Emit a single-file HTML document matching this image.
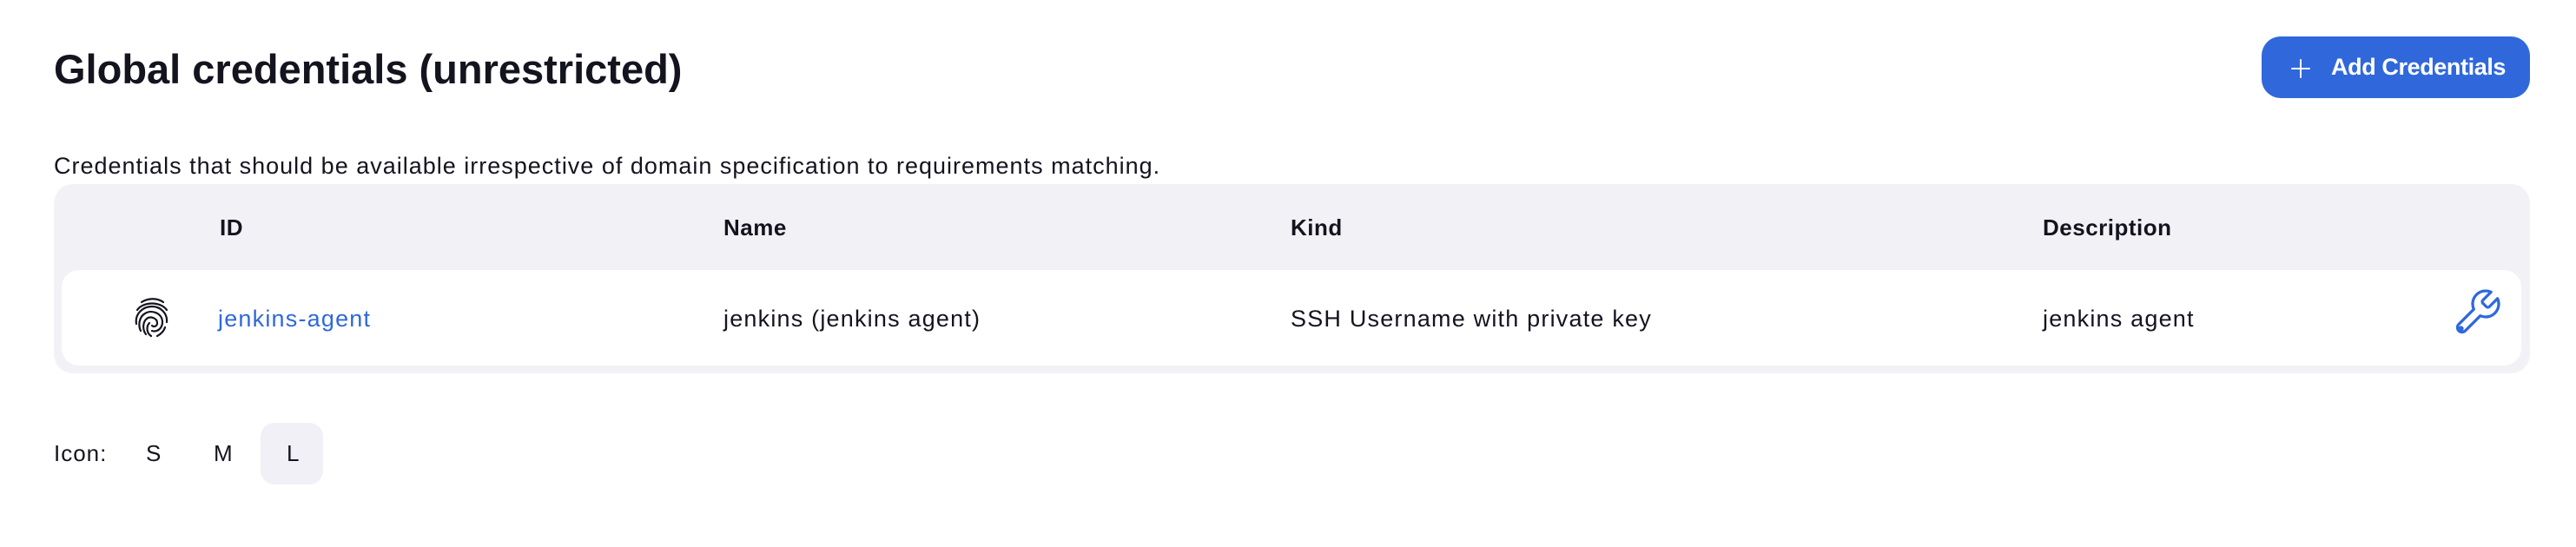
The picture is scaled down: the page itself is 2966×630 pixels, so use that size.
<!DOCTYPE html>
<html><head><meta charset="utf-8"><style>
*{margin:0;padding:0;box-sizing:border-box}
body{width:2966px;height:630px;background:#fff;font-family:"Liberation Sans",sans-serif;color:#14141f;position:relative;overflow:hidden}
.a{position:absolute;white-space:nowrap}
h1{position:absolute;left:62px;top:50px;font-size:47px;font-weight:700;line-height:60px;letter-spacing:0px}
.btn{position:absolute;left:2604px;top:42px;width:309px;height:71px;background:#3068dc;border-radius:22px;color:#fff;font-weight:700;font-size:27px}
.desc{left:62px;top:174px;font-size:27px;line-height:34px;letter-spacing:1px}
.tbl{position:absolute;left:62px;top:212px;width:2851px;height:218px;background:#f2f2f6;border-radius:22px}
.row{position:absolute;left:71px;top:311px;width:2832px;height:110px;background:#fff;border-radius:20px}
.h{font-size:26px;font-weight:700;top:247px;line-height:30px;letter-spacing:0.5px}
.c{font-size:27px;top:350px;line-height:34px;letter-spacing:1.2px}
.sz{font-size:26px;top:506px;line-height:32px;letter-spacing:1px}
</style></head><body>
<h1>Global credentials (unrestricted)</h1>
<div class="btn">
<svg class="a" style="left:34px;top:26px" width="22" height="22" viewBox="0 0 22 22"><path d="M11 1v20M1 11h20" stroke="#fff" stroke-width="2" stroke-linecap="round"/></svg>
<span class="a" style="left:80px;top:19px;line-height:32px;letter-spacing:-0.4px">Add Credentials</span>
</div>
<div class="a desc">Credentials that should be available irrespective of domain specification to requirements matching.</div>
<div class="tbl"></div>
<div class="row"></div>
<div class="a h" style="left:253px">ID</div>
<div class="a h" style="left:833px">Name</div>
<div class="a h" style="left:1486px">Kind</div>
<div class="a h" style="left:2352px">Description</div>
<svg class="a" style="left:155px;top:343px" width="40" height="46" viewBox="0 0 40 46" fill="none" stroke="#14141f" stroke-width="2.2" stroke-linecap="round">
<path d="M8 5C16 0 26 0 33 5"/>
<path d="M3 14C10 4 30 4 37 14"/>
<path d="M2 30C0 18 10 10 20 10C30 10 38 18 37 28"/>
<path d="M7 38C4 32 5 22 12 18C20 13 32 18 32 28C32 35 26 40 20 38"/>
<path d="M13 42C9 37 9 28 14 24C18 21 26 23 26 29C26 33 22 34 20 32"/>
<path d="M19 44C14 41 13 33 17 29"/>
<path d="M26 44C30 42 34 38 35 34"/>
</svg>
<div class="a c" style="left:251px;color:#3068dc">jenkins-agent</div>
<div class="a c" style="left:833px">jenkins (jenkins agent)</div>
<div class="a c" style="left:1486px">SSH Username with private key</div>
<div class="a c" style="left:2352px">jenkins agent</div>
<svg class="a" style="left:2822px;top:330px" width="60" height="60" viewBox="0 0 24 24" fill="none" stroke="#3068dc" stroke-width="1.3" stroke-linecap="round" stroke-linejoin="round">
<path d="M14.7 6.3a1 1 0 0 0 0 1.4l1.6 1.6a1 1 0 0 0 1.4 0l3.77-3.77a6 6 0 0 1-7.94 7.94l-6.91 6.91a2.12 2.12 0 0 1-3-3l6.91-6.91a6 6 0 0 1 7.94-7.94l-3.76 3.76z"/>
<circle cx="4.6" cy="19.4" r="0.6"/>
</svg>
<div class="a sz" style="left:62px">Icon:</div>
<div class="a sz" style="left:168px">S</div>
<div class="a sz" style="left:246px">M</div>
<div class="a" style="left:300px;top:487px;width:72px;height:71px;background:#f0f0f6;border-radius:16px"></div>
<div class="a sz" style="left:330px">L</div>
</body></html>
